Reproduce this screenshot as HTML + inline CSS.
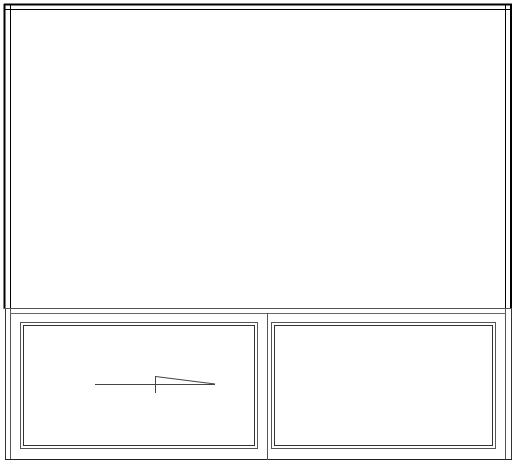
<!DOCTYPE html>
<html><head><style>html,body{margin:0;padding:0;background:#fff;width:522px;height:468px;overflow:hidden}</style></head>
<body>
<svg width="522" height="468" viewBox="0 0 522 468" xmlns="http://www.w3.org/2000/svg" shape-rendering="crispEdges">
<g fill="none" stroke="#000">
<!-- top box -->
<line x1="4" y1="4.5" x2="512" y2="4.5" stroke-width="2"/>
<line x1="4" y1="9.5" x2="512" y2="9.5"/>
<line x1="4.5" y1="4" x2="4.5" y2="309" stroke-width="2"/>
<line x1="10.5" y1="4" x2="10.5" y2="309" stroke-width="1"/>
<line x1="505.5" y1="4" x2="505.5" y2="309" stroke-width="1"/>
<line x1="511" y1="4" x2="511" y2="309" stroke-width="2"/>
<line x1="4" y1="308.5" x2="512" y2="308.5" stroke="#555"/>
<!-- bottom section -->
<line x1="5.5" y1="309" x2="5.5" y2="460" stroke="#333"/>
<line x1="10.5" y1="309" x2="10.5" y2="460" stroke="#555"/>
<line x1="505.5" y1="309" x2="505.5" y2="460" stroke="#555"/>
<line x1="511.5" y1="309" x2="511.5" y2="460" stroke="#333"/>
<line x1="10" y1="313.5" x2="506" y2="313.5" stroke="#666"/>
<line x1="5" y1="459.5" x2="512" y2="459.5" stroke="#222"/>
<line x1="267.5" y1="313" x2="267.5" y2="460" stroke="#555"/>
<!-- left sash -->
<rect x="20.5" y="322.5" width="237" height="126" stroke="#555"/>
<rect x="23.5" y="325.5" width="231" height="120" stroke="#333"/>
<!-- right sash -->
<rect x="271.5" y="322.5" width="224" height="126" stroke="#555"/>
<rect x="274.5" y="325.5" width="218" height="120" stroke="#333"/>
<!-- symbol -->
<line x1="95" y1="384.5" x2="215" y2="384.5" stroke="#444"/>
<line x1="155.5" y1="376" x2="155.5" y2="393" stroke="#444"/>
<path d="M155.5 376.5 L215 384" stroke="#444" shape-rendering="auto"/>
</g>
</svg>
</body></html>
